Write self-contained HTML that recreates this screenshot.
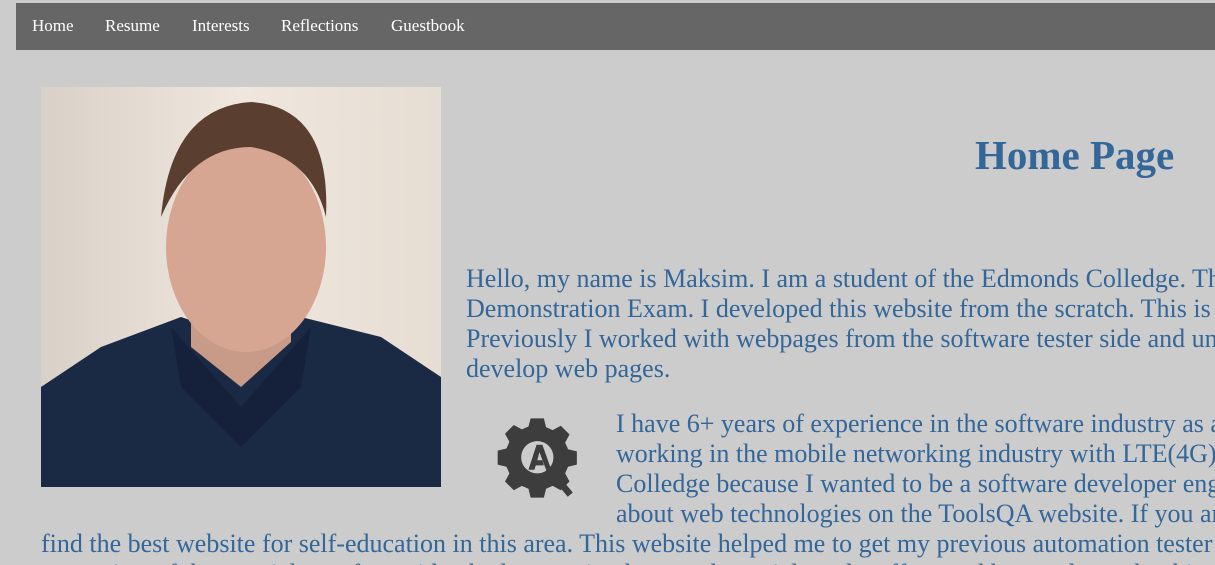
<!DOCTYPE html>
<html><head><meta charset="utf-8"><style>
html,body{margin:0;padding:0;background:#cccccc;width:1215px;height:565px;overflow:hidden;font-family:"Liberation Serif",serif}
#w{position:relative;width:1215px;height:565px;overflow:hidden}
.nav{position:absolute;left:16px;top:3px;width:1199px;height:47px;background:#666666}
.nav span{position:absolute;top:14px;color:#fff;font-size:17px;line-height:18px}
.l{position:absolute;white-space:nowrap;color:#336699;font-size:26px;line-height:30px}
h1{position:absolute;left:975px;top:130px;margin:0;color:#336699;font-size:41px;font-weight:bold;line-height:50px;white-space:nowrap}
</style></head><body><div id="w">
<div class="nav">
<span style="left:16px">Home</span><span style="left:89px">Resume</span><span style="left:176px">Interests</span><span style="left:265px">Reflections</span><span style="left:375px">Guestbook</span>
</div>
<svg style="position:absolute;left:41px;top:87px" width="400" height="400" viewBox="0 0 400 400">
<defs><linearGradient id="bg" x1="0" x2="1"><stop offset="0" stop-color="#d9d0c8"/><stop offset="0.5" stop-color="#efe6de"/><stop offset="1" stop-color="#e6ddd3"/></linearGradient></defs>
<rect width="400" height="400" fill="url(#bg)"/>
<path d="M0 300 L60 260 L140 230 L200 250 L260 230 L340 250 L400 290 L400 400 L0 400Z" fill="#1b2a44"/>
<path d="M150 200 L150 260 L200 300 L250 255 L250 200Z" fill="#c89a88"/>
<ellipse cx="205" cy="160" rx="80" ry="105" fill="#d6a693"/>
<path d="M120 130 Q130 20 210 15 Q290 20 285 130 Q270 70 210 60 Q150 60 120 130Z" fill="#5a3f30"/>
<path d="M130 240 L200 320 L270 240 L260 300 L200 360 L140 300Z" fill="#15213a"/>
</svg>
<h1>Home Page</h1>
<div class="l" style="left:466px;top:264px">Hello, my name is Maksim. I am a student of the Edmonds Colledge. This website is my</div>
<div class="l" style="left:466px;top:294px">Demonstration Exam. I developed this website from the scratch. This is my first website.</div>
<div class="l" style="left:466px;top:324px">Previously I worked with webpages from the software tester side and understood how to</div>
<div class="l" style="left:466px;top:354px">develop web pages.</div>
<svg style="position:absolute;left:494px;top:412px" width="88" height="92" viewBox="0 0 120 120">
<path fill="#3d3d3d" fill-rule="evenodd" d="M50 6h18l3 12 9 4 11-6 12 12-6 11 4 9 12 3v18l-12 3-4 9 6 11-12 12-11-6-9 4-3 12H50l-3-12-9-4-11 6-12-12 6-11-4-9-12-3V50l12-3 4-9-6-11 12-12 11 6 9-4z M59 37a22 22 0 1 0 0.1 0z"/>
<path fill="#3d3d3d" d="M58 42 L47 76 L55 76 L57 70 L68 70 L66 63 L59 63 L62 52 L71 76 L78 76 L66 42Z"/>
<path stroke="#3d3d3d" stroke-width="9" d="M74 74 L104 110"/>
</svg>
<div class="l" style="left:616px;top:409px">I have 6+ years of experience in the software industry as a</div>
<div class="l" style="left:616px;top:439px">working in the mobile networking industry with LTE(4G) and</div>
<div class="l" style="left:616px;top:469px">Colledge because I wanted to be a software developer engineer</div>
<div class="l" style="left:616px;top:499px">about web technologies on the ToolsQA website. If you are</div>
<div class="l" style="left:41px;top:529px">find the best website for self-education in this area. This website helped me to get my previous automation tester position.</div>
<div class="l" style="left:41px;top:559px">some sites of the tutorials are free with a bad reputation but good tutorials and stuff to read here to learn the things.</div>
</div></body></html>
